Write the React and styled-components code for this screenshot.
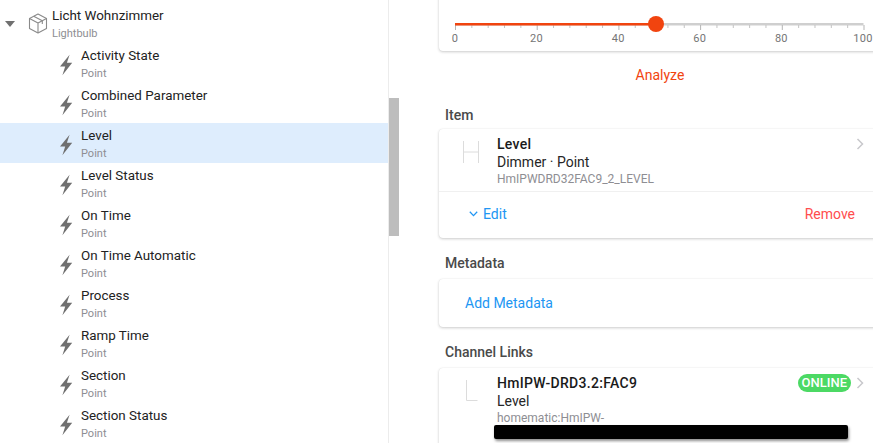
import styled, { createGlobalStyle } from "styled-components";

const points = [
  { title: "Activity State" },
  { title: "Combined Parameter" },
  { title: "Level", selected: true },
  { title: "Level Status" },
  { title: "On Time" },
  { title: "On Time Automatic" },
  { title: "Process" },
  { title: "Ramp Time" },
  { title: "Section" },
  { title: "Section Status" },
];

const GlobalStyle = createGlobalStyle`
  html, body {
    margin: 0;
    padding: 0;
    height: 443px;
    overflow: hidden;
    background: #ffffff;
    font-family: "Roboto", sans-serif;
  }
`;

function BoltIcon() {
  return (
    <svg width="14" height="22" viewBox="0 0 14 22">
      <path d="M10.6 0.8 L1 12.4 H6.2 L3.4 21.2 L13.2 8.8 H7.9 Z" fill="#6f6f6f" />
    </svg>
  );
}

function CubeIcon() {
  return (
    <svg width="20" height="21" viewBox="0 0 20 21" fill="none" stroke="#8a8a8a" strokeWidth="1.1" strokeLinejoin="round">
      <path d="M10 1 L18.5 5.5 V15.5 L10 20 L1.5 15.5 V5.5 Z" />
      <path d="M1.5 5.5 L10 10 L18.5 5.5 M10 10 V20" />
      <path d="M5.7 3.2 L14.3 7.8 V11" />
    </svg>
  );
}

function Chevron() {
  return (
    <svg width="8" height="12" viewBox="0 0 8 12" fill="none" stroke="#c8c8cc" strokeWidth="1.5">
      <path d="M1.5 1 L6.5 6 L1.5 11" />
    </svg>
  );
}

function Ticks() {
  const ticks = Array.from({ length: 26 }, (_, i) => i);
  return (
    <TickSvg width="412" height="9" viewBox="0 0 412 9">
      <rect x="1" y="0" width="408.5" height="2.5" fill="#cfcfcf" />
      {ticks.map((i) => (
        <rect
          key={i}
          x={1 + i * 16.34}
          y="2"
          width="1"
          height={i % 5 === 0 ? 5 : 3}
          fill={i % 5 === 0 ? "#b5b5b5" : "#c4c4c4"}
        />
      ))}
      <rect x="1" y="0" width="200" height="2.5" fill="#f1440f" />
    </TickSvg>
  );
}

export default function App() {
  return (
    <Page>
      <GlobalStyle />
      <TreePane>
        <RootRow>
          <Caret />
          <CubeSlot>
            <CubeIcon />
          </CubeSlot>
          <Labels>
            <Title>Licht Wohnzimmer</Title>
            <Sub>Lightbulb</Sub>
          </Labels>
        </RootRow>
        {points.map((p) => (
          <PointRow key={p.title} selected={p.selected}>
            <BoltSlot>
              <BoltIcon />
            </BoltSlot>
            <Labels>
              <Title>{p.title}</Title>
              <Sub>Point</Sub>
            </Labels>
          </PointRow>
        ))}
        <Scrollbar />
      </TreePane>
      <DetailPane>
        <SliderCard>
          <SliderTrack>
            <Ticks />
            <Thumb />
          </SliderTrack>
          <Scale>
            {[0, 20, 40, 60, 80, 100].map((n) => (
              <ScaleLabel key={n}>{n}</ScaleLabel>
            ))}
          </Scale>
        </SliderCard>
        <Analyze>Analyze</Analyze>

        <SectionTitle first>Item</SectionTitle>
        <Card>
          <MediaRow>
            <Thumbnail>
              <svg width="18" height="22" viewBox="0 0 18 22" fill="none" stroke="#dcdcdc">
                <path d="M0.5 0 V22 M0.5 11 H15.5 M15.5 0 V22" />
              </svg>
            </Thumbnail>
            <MediaText>
              <CardTitle>Level</CardTitle>
              <CardLine>Dimmer · Point</CardLine>
              <CardMeta>HmIPWDRD32FAC9_2_LEVEL</CardMeta>
            </MediaText>
            <RowEnd>
              <Chevron />
            </RowEnd>
          </MediaRow>
          <Actions>
            <EditLink>
              <svg width="9" height="6" viewBox="0 0 9 6" fill="none" stroke="#2196f3" strokeWidth="1.3">
                <path d="M0.8 0.8 L4.5 4.6 L8.2 0.8" />
              </svg>
              Edit
            </EditLink>
            <RemoveLink>Remove</RemoveLink>
          </Actions>
        </Card>

        <SectionTitle>Metadata</SectionTitle>
        <Card>
          <AddRow>Add Metadata</AddRow>
        </Card>

        <SectionTitle>Channel Links</SectionTitle>
        <Card>
          <MediaRow tall>
            <Thumbnail>
              <svg width="16" height="22" viewBox="0 0 16 22" fill="none" stroke="#dcdcdc">
                <path d="M3.5 0 V20.5 H14.5" />
              </svg>
            </Thumbnail>
            <MediaText>
              <CardTitle>HmIPW-DRD3.2:FAC9</CardTitle>
              <CardLine>Level</CardLine>
              <CardMeta>homematic:HmIPW-</CardMeta>
              <Redacted />
            </MediaText>
            <RowEnd>
              <Online>ONLINE</Online>
              <Chevron />
            </RowEnd>
          </MediaRow>
        </Card>
      </DetailPane>
    </Page>
  );
}

const Page = styled.div`
  display: flex;
  width: 873px;
  height: 443px;
  overflow: hidden;
`;

const TreePane = styled.div`
  position: relative;
  box-sizing: border-box;
  width: 389px;
  flex: none;
  padding-top: 3px;
  border-right: 1px solid #ececec;
`;

const Scrollbar = styled.div`
  position: absolute;
  top: 98px;
  left: 389px;
  width: 10px;
  height: 138px;
  background: #bdbdbd;
`;

const RootRow = styled.div`
  display: flex;
  align-items: center;
  height: 40px;
  padding-left: 5px;
`;

const Caret = styled.span`
  width: 0;
  height: 0;
  margin-top: 1px;
  border-left: 5px solid transparent;
  border-right: 5px solid transparent;
  border-top: 6px solid #707070;
`;

const CubeSlot = styled.span`
  display: flex;
  margin: 0 4px 0 13px;
`;

const PointRow = styled.div`
  display: flex;
  align-items: center;
  height: 40px;
  padding-left: 59px;
  background: ${({ selected }) => (selected ? "#deedfd" : "transparent")};
`;

const BoltSlot = styled.span`
  display: flex;
  width: 22px;
  margin-top: 4px;
`;

const Labels = styled.div`
  display: flex;
  flex-direction: column;
`;

const Title = styled.div`
  font-size: 13.4px;
  line-height: 20px;
  color: #222222;
`;

const Sub = styled.div`
  margin-top: 1px;
  font-size: 11px;
  line-height: 14px;
  color: #8e8e93;
`;

const DetailPane = styled.div`
  flex: 1;
  min-width: 0;
  padding-left: 50px;
  overflow: hidden;
`;

const Card = styled.div`
  width: 445px;
  border-radius: 4px;
  background: #ffffff;
  box-shadow: 0 1px 3px rgba(0, 0, 0, 0.2), 0 0 1px rgba(0, 0, 0, 0.1);
`;

const SliderCard = styled(Card)`
  box-sizing: border-box;
  height: 61px;
  margin-top: -10px;
  padding: 33px 0 0 15px;
`;

const SliderTrack = styled.div`
  position: relative;
  height: 10px;
`;

const TickSvg = styled.svg`
  display: block;
`;

const Thumb = styled.span`
  position: absolute;
  top: -7px;
  left: 194px;
  width: 16px;
  height: 16px;
  border-radius: 50%;
  background: #f1440f;
`;

const Scale = styled.div`
  display: flex;
  justify-content: space-between;
  width: 408px;
  margin-left: 1px;
`;

const ScaleLabel = styled.span`
  display: flex;
  justify-content: center;
  width: 0;
  white-space: nowrap;
  font-size: 11px;
  line-height: 12px;
  color: #757575;
  letter-spacing: 0.3px;
`;

const Analyze = styled.div`
  width: 442px;
  margin-top: 15px;
  text-align: center;
  font-size: 14px;
  line-height: 18px;
  color: #f1440f;
`;

const SectionTitle = styled.div`
  margin: ${({ first }) => (first ? "22px 0 5px 6px" : "16px 0 7px 6px")};
  font-size: 14px;
  line-height: 18px;
  font-weight: 500;
  color: #4a4a4a;
`;

const MediaRow = styled.div`
  display: flex;
  align-items: flex-start;
  box-sizing: border-box;
  height: ${({ tall }) => (tall ? "90px" : "63px")};
  padding-top: 6px;
  border-bottom: 1px solid #f0f0f0;
`;

const Thumbnail = styled.div`
  display: flex;
  box-sizing: border-box;
  flex: none;
  width: 58px;
  padding: 6px 0 0 24px;
`;

const MediaText = styled.div`
  flex: 1;
  min-width: 0;
`;

const CardTitle = styled.div`
  font-size: 14px;
  line-height: 18px;
  font-weight: 500;
  letter-spacing: 0.3px;
  color: #1a1a1a;
`;

const CardLine = styled.div`
  font-size: 14px;
  line-height: 18px;
  color: #262626;
`;

const CardMeta = styled.div`
  font-size: 12px;
  line-height: 16px;
  color: #8e8e93;
`;

const Redacted = styled.div`
  width: 354px;
  height: 14px;
  margin: -1px 0 0 -3px;
  border-radius: 2px;
  background: #000000;
  box-shadow: 1px 2px 3px rgba(0, 0, 0, 0.45);
`;

const RowEnd = styled.div`
  display: flex;
  flex: none;
  align-items: center;
  justify-content: flex-end;
  gap: 5px;
  height: 18px;
  padding-right: 20px;
`;

const Online = styled.span`
  padding: 0 4px;
  border-radius: 9px;
  background: #4cd964;
  color: #ffffff;
  font-size: 13px;
  font-weight: 500;
  line-height: 18px;
`;

const Actions = styled.div`
  display: flex;
  align-items: center;
  justify-content: space-between;
  height: 44px;
  padding: 0 29px 2px 30px;
  font-size: 14px;
`;

const EditLink = styled.span`
  display: flex;
  align-items: center;
  gap: 5px;
  color: #2196f3;
`;

const RemoveLink = styled.span`
  color: #ff4d4d;
`;

const AddRow = styled.div`
  height: 48px;
  padding-left: 26px;
  font-size: 14px;
  line-height: 48px;
  color: #2196f3;
`;
